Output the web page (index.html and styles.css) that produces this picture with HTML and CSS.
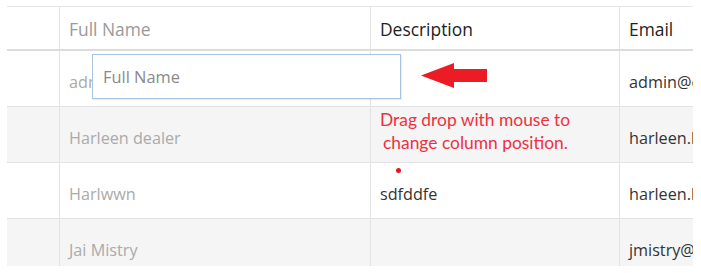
FILE: index.html
```html
<!DOCTYPE html>
<html>
<head>
<meta charset="utf-8">
<link rel="stylesheet" href="styles.css">
</head>
<body>
<div class="frame">
  <div class="grid">
    <div class="row head">
      <div class="cell c1"></div>
      <div class="cell c2 dim">Full Name</div>
      <div class="cell c3">Description</div>
      <div class="cell c4">Email</div>
    </div>
    <div class="row">
      <div class="cell c1"></div>
      <div class="cell c2 dim">admin</div>
      <div class="cell c3"></div>
      <div class="cell c4">admin@example.com</div>
    </div>
    <div class="row alt">
      <div class="cell c1"></div>
      <div class="cell c2 dim">Harleen dealer</div>
      <div class="cell c3"></div>
      <div class="cell c4">harleen.k@example.com</div>
    </div>
    <div class="row">
      <div class="cell c1"></div>
      <div class="cell c2 dim">Harlwwn</div>
      <div class="cell c3">sdfddfe</div>
      <div class="cell c4">harleen.k@example.com</div>
    </div>
    <div class="row alt">
      <div class="cell c1"></div>
      <div class="cell c2 dim">Jai Mistry</div>
      <div class="cell c3"></div>
      <div class="cell c4">jmistry@example.com</div>
    </div>
  </div>
  <div class="ghost">Full Name</div>
  <svg class="arrow" width="66" height="26" viewBox="0 0 66 26">
    <polygon points="0,12.5 33,0 33,6 66,6 66,19 33,19 33,25" fill="#ec1c24"/>
  </svg>
  <div class="note">Drag drop with mouse to<br><span class="l2">change column position.</span></div>
  <div class="dot"></div>
</div>
</body>
</html>
```
FILE: styles.css
```css
html, body {
  margin: 0;
  padding: 0;
  background: #fff;
}
.frame {
  position: relative;
  width: 701px;
  height: 273px;
  overflow: hidden;
  font-family: "Open Sans", "Noto Sans", sans-serif;
}
.grid {
  position: absolute;
  left: 7px;
  top: 6px;
  width: 686px;
  height: 259px;
  overflow: hidden;
  border-top: 1px solid #e6e6e6;
}
.row {
  display: grid;
  grid-template-columns: 53px 311px 249px 240px;
  height: 55px;
  border-bottom: 1px solid #e3e3e3;
  background: #fff;
}
.row.alt {
  background: #f5f5f5;
}
.row.head {
  height: 42px;
  border-bottom: 2px solid #dcdcdc;
}
.cell {
  border-right: 1px solid #e3e3e3;
  padding: 0 9px;
  display: flex;
  align-items: center;
  padding-top: 6px;
  font-size: 16.2px;
  color: #333;
  white-space: nowrap;
  overflow: hidden;
}
.head .cell {
  padding-top: 1px;
  font-size: 17.4px;
  color: #222;
}
.cell.dim {
  color: #aaa;
}
.head .cell.dim {
  color: #999;
}
.ghost {
  position: absolute;
  left: 92px;
  top: 54px;
  width: 297px;
  height: 43px;
  border: 1px solid #a9c4df;
  background: #fff;
  box-shadow: 1px 1px 1px rgba(0,0,0,0.08);
  padding-left: 10px;
  display: flex;
  align-items: center;
  font-size: 16.4px;
  color: #8a8a8a;
}
.arrow {
  position: absolute;
  left: 421px;
  top: 63px;
}
.note {
  position: absolute;
  left: 380px;
  top: 108px;
  font-family: "Lato", sans-serif;
  font-size: 17.4px;
  line-height: 23px;
  color: #f0303e;
}
.note .l2 {
  padding-left: 3px;
}
.dot {
  position: absolute;
  left: 396px;
  top: 168px;
  width: 5px;
  height: 5px;
  border-radius: 50%;
  background: #e8141f;
}
```
